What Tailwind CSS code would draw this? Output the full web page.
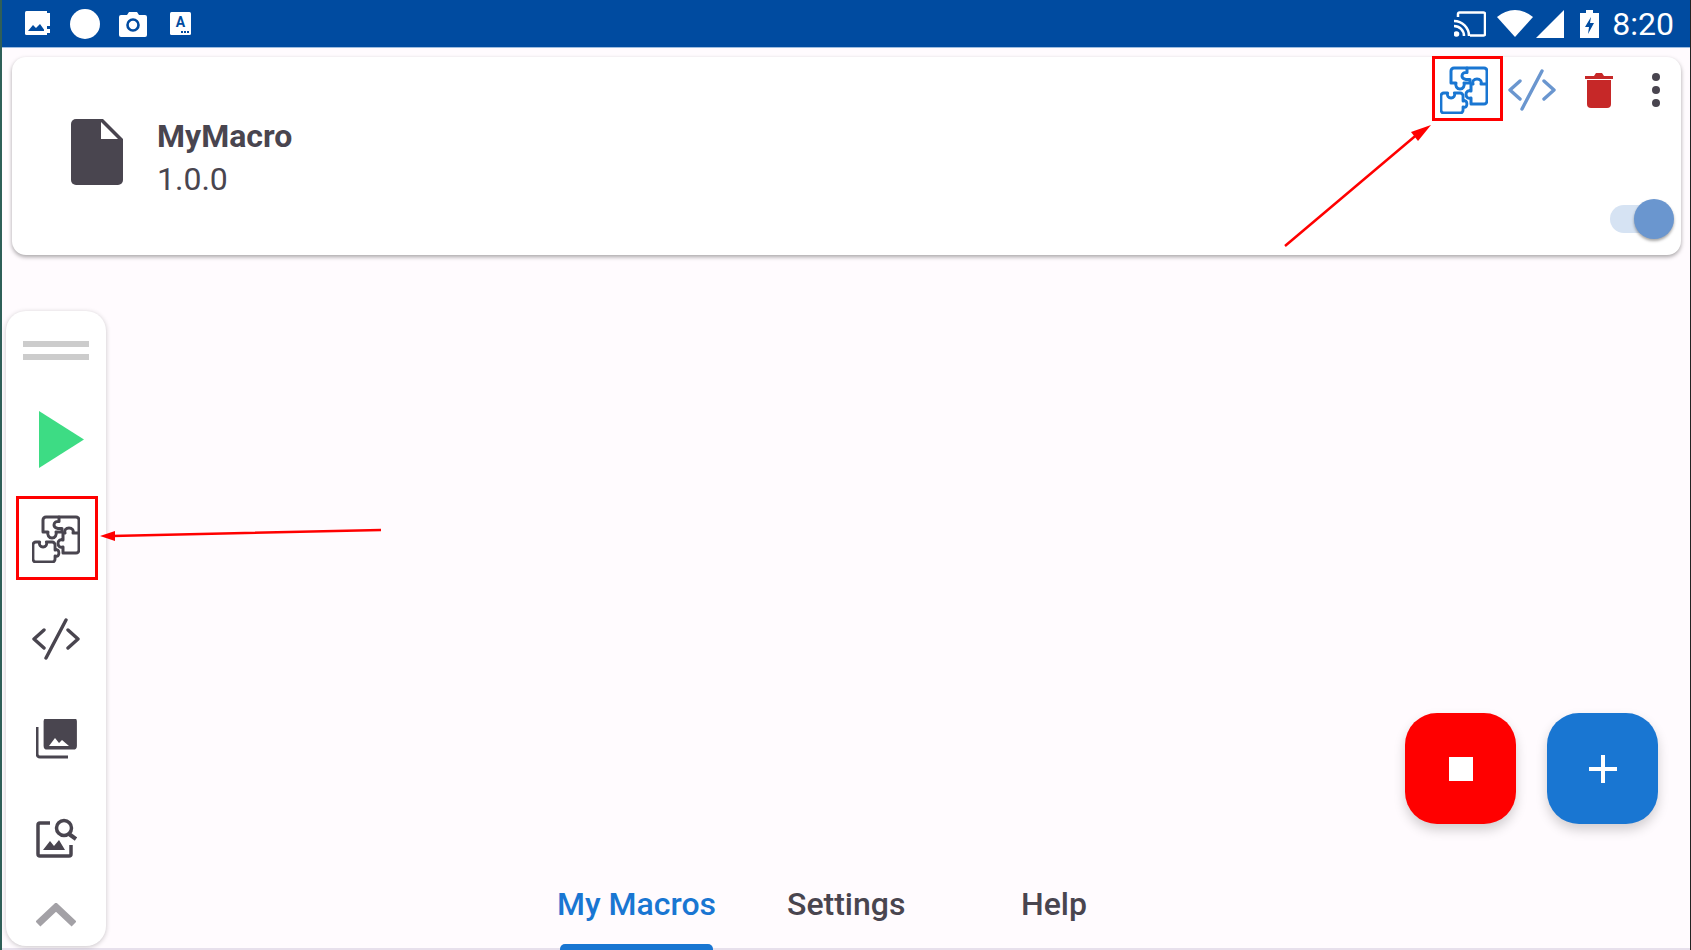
<!DOCTYPE html>
<html lang="en">
<head>
    <meta charset="UTF-8">
    <meta name="viewport" content="width=device-width, initial-scale=1.0">
    <title>MyMacro</title>
    <script src="https://cdn.jsdelivr.net/npm/@tailwindcss/browser@4"></script>
</head>
<body class="bg-[#fffbfe] overflow-hidden">
    <!-- shared icons -->
    <svg class="hidden">
        <symbol id="puzzle" viewBox="0 0 48 48">
            <g fill="none" stroke="currentColor" stroke-width="3" stroke-linejoin="round" stroke-linecap="round">
                <path d="M27 2H14a3 3 0 0 0-3 3v12h5c-1 3 1 6 4 6s5-3 4-6h6v-3.500c-5 .5-8-1-8-3.500s2-4 5-3.500z"/>
                <path d="M27 2h17a3 3 0 0 1 3 3v13h-6c1-3-1-5-4-5s-5 2-4 5h-2v7c-3-1-5 1-5 3.500s2 4.500 5 3.500v6h13a3 3 0 0 0 3-3V18"/>
                <path d="M4 27h4c-1 3 1 5 3.500 5s4.500-2 3.500-5h6a3 3 0 0 1 3 3v5c3-1 4 1 4 3s-1 4-4 3v3a3 3 0 0 1-3 3H4a3 3 0 0 1-3-3V30a3 3 0 0 1 3-3z" transform="translate(0 0) scale(.96 1)"/>
            </g>
        </symbol>
        <symbol id="code" viewBox="0 0 48 42">
            <g fill="none" stroke="currentColor" stroke-width="3.4" stroke-linecap="round" stroke-linejoin="round">
                <path d="M12 12 2 21l10 9M36 12l10 9-10 9M34 2 14 40"/>
            </g>
        </symbol>
    </svg>

    <div class="relative h-[950px] w-[1691px] flex flex-col font-['Roboto',sans-serif] text-[#49454f]">
        <!-- window edges -->
        <div class="absolute left-0 top-0 h-full w-[2px] bg-[#2f5f58] z-20"></div>
        <div class="absolute right-0 top-0 h-full w-[1px] bg-[#222] z-20"></div>

        <!-- status bar -->
        <header class="h-[48px] shrink-0 bg-[#004ba0] border-b border-[#9dbde0] flex items-center pl-[25px] pr-[17px] text-white">
            <svg class="w-[27px] h-[25px]" viewBox="0 0 27 25">
                <rect x="0" y="0" width="22" height="24" rx="1.500" fill="#fff"/>
                <rect x="22" y="2" width="3" height="13" fill="#fff"/>
                <rect x="22" y="18" width="3" height="4" fill="#fff"/>
                <path d="M3 20l5-6 3 3 4-4 5 7z" fill="#004ba0"/>
                <rect x="19" y="0" width="3" height="24" fill="#fff"/>
            </svg>
            <div class="w-[30px] h-[30px] rounded-full bg-white ml-[18px]"></div>
            <svg class="w-[28px] h-[26px] ml-[19px]" viewBox="0 0 28 26">
                <path d="M2 4h6l2-3h8l2 3h6a2 2 0 0 1 2 2v18a2 2 0 0 1-2 2H2a2 2 0 0 1-2-2V6a2 2 0 0 1 2-2z" fill="#fff"/>
                <circle cx="14" cy="14" r="5.500" fill="none" stroke="#004ba0" stroke-width="2.600"/>
            </svg>
            <svg class="w-[21px] h-[23px] ml-[23px]" viewBox="0 0 21 23">
                <rect width="21" height="23" rx="1.500" fill="#fff"/>
                <text x="10.500" y="15" font-size="14" font-weight="700" text-anchor="middle" fill="#004ba0" font-family="Roboto">A</text>
                <path d="M11 19h2v2h-2zM14 19h2v2h-2zM17 19h2v2h-2z" fill="#004ba0"/>
            </svg>

            <div class="ml-auto flex items-center">
                <svg class="w-[32px] h-[26px]" viewBox="0 0 32 26">
                    <path d="M4 6V3a1.500 1.500 0 0 1 1.500-1.500h24A1.500 1.500 0 0 1 31 3v20a1.500 1.500 0 0 1-1.500 1.500H16" fill="none" stroke="#fff" stroke-width="2.500"/>
                    <path d="M0 10a15 15 0 0 1 15 15M0 15a10 10 0 0 1 10 10" fill="none" stroke="#fff" stroke-width="2.500"/>
                    <circle cx="2.500" cy="23" r="2.800" fill="#fff"/>
                </svg>
                <svg class="w-[36px] h-[27px] ml-[11px]" viewBox="0 0 36 27">
                    <path d="M0 7a27 27 0 0 1 36 0L18 27z" fill="#fff"/>
                </svg>
                <svg class="w-[28px] h-[28px] ml-[3px]" viewBox="0 0 28 28">
                    <path d="M28 0v28H0z" fill="#fff"/>
                </svg>
                <svg class="w-[19px] h-[28px] ml-[16px]" viewBox="0 0 19 28">
                    <path d="M6 0h7v3h6v25H0V3h6z" fill="#fff"/>
                    <path d="M11 7l-6 10h4l-1 7 6-11h-4z" fill="#004ba0"/>
                </svg>
                <span class="ml-[13px] text-[32px] leading-none">8:20</span>
            </div>
        </header>

        <!-- macro card -->
        <section class="ml-[12px] mr-[10px] mt-[9px] h-[198px] shrink-0 bg-white rounded-[14px] shadow-[0_2px_4px_rgba(0,0,0,0.35)] flex relative">
            <div class="flex items-center pl-[59px] flex-1">
                <svg class="w-[52px] h-[66px] mb-[8px]" viewBox="0 0 52 66">
                    <path d="M5 0h27l20 20v41a5 5 0 0 1-5 5H5a5 5 0 0 1-5-5V5a5 5 0 0 1 5-5z" fill="#49454f"/>
                    <path d="M30 3v17h17z" fill="#fff"/>
                </svg>
                <div class="ml-[34px] pt-[3px] flex flex-col">
                    <span class="text-[32px] leading-[42px] font-bold -mt-[1px] mb-[1px]">MyMacro</span>
                    <span class="text-[32px] leading-[42px]">1.0.0</span>
                </div>
            </div>
            <div class="flex flex-col items-end pr-[7px]">
                <div class="flex items-center h-[66px] pr-[14px]">
                    <svg class="w-[48px] h-[48px] text-[#1976d2]"><use href="#puzzle"/></svg>
                    <svg class="w-[48px] h-[42px] ml-[20px] text-[#6a96cf]"><use href="#code"/></svg>
                    <svg class="w-[28px] h-[36px] ml-[29px]" viewBox="0 0 28 36">
                        <path d="M0 4h9l2-3h6l2 3h9v3H0z" fill="#c62828"/>
                        <path d="M2 8h24v24a4 4 0 0 1-4 4H6a4 4 0 0 1-4-4z" fill="#c62828"/>
                    </svg>
                    <div class="ml-[39px] flex flex-col gap-[5px]">
                        <div class="w-[8px] h-[8px] rounded-full bg-[#49454f]"></div>
                        <div class="w-[8px] h-[8px] rounded-full bg-[#49454f]"></div>
                        <div class="w-[8px] h-[8px] rounded-full bg-[#49454f]"></div>
                    </div>
                </div>
                <div class="mt-[76px] w-[64px] h-[40px] flex items-center relative">
                    <div class="w-[51px] h-[28px] rounded-full bg-[#d6e3f3]"></div>
                    <div class="absolute right-0 top-0 w-[40px] h-[40px] rounded-full bg-[#6a96cf] shadow-[0_2px_3px_rgba(0,0,0,0.35)]"></div>
                </div>
            </div>
        </section>

        <!-- tabs -->
        <nav class="mt-auto h-[62px] relative shrink-0 flex text-[32px] font-medium leading-none border-b-2 border-[#e7e0ec]">
            <div class="ml-[557px] text-[#1976d2] whitespace-nowrap w-[160px]">My Macros</div>
            <div class="ml-[70px] whitespace-nowrap w-[164px]">Settings</div>
            <div class="ml-[70px] whitespace-nowrap">Help</div>
            <div class="absolute left-[560px] top-[56px] w-[153px] h-[6px] rounded-t-[5px] bg-[#1976d2]"></div>
        </nav>

        <!-- floating tool panel -->
        <aside class="absolute left-[6px] top-[311px] w-[100px] h-[635px] bg-white rounded-[20px] shadow-[0_1px_5px_rgba(0,0,0,0.22)] flex flex-col items-center">
            <div class="mt-[30px] w-[66px] flex flex-col gap-[7px]">
                <div class="h-[6px] bg-[#cccccc]"></div>
                <div class="h-[6px] bg-[#cccccc]"></div>
            </div>
            <svg class="mt-[51px] ml-[10px] w-[45px] h-[57px]" viewBox="0 0 45 57">
                <path d="M0 0l45 28.500L0 57z" fill="#3ddc84"/>
            </svg>
            <svg class="mt-[47px] w-[48px] h-[48px]"><use href="#puzzle"/></svg>
            <svg class="mt-[55px] w-[48px] h-[42px]"><use href="#code"/></svg>
            <svg class="mt-[59px] w-[41px] h-[40px]" viewBox="0 0 41 40">
                <path d="M8 0h29a4 4 0 0 1 4 4v27a4 4 0 0 1-4 4H8a4 4 0 0 1-4-4V4a4 4 0 0 1 4-4z" fill="#49454f" transform="translate(4 -1) scale(0.9)"/>
                <path d="M1 8v27a3 3 0 0 0 3 3h28" fill="none" stroke="#49454f" stroke-width="3"/>
                <path d="M13 27l6-8 4 5 3-3 7 6z" fill="#fff"/>
            </svg>
            <svg class="mt-[58px] w-[41px] h-[41px]" viewBox="0 0 41 41">
                <path d="M14 6H4a2 2 0 0 0-2 2v29a2 2 0 0 0 2 2h29a2 2 0 0 0 2-2V28" fill="none" stroke="#49454f" stroke-width="3.500"/>
                <path d="M7 33l7-9 4 5 5-6 6 10z" fill="#49454f"/>
                <circle cx="28" cy="11" r="7.500" fill="none" stroke="#49454f" stroke-width="3.500"/>
                <path d="M33 17l7 5" stroke="#49454f" stroke-width="4"/>
            </svg>
            <svg class="mt-[45px] w-[40px] h-[24px]" viewBox="0 0 40 24">
                <path d="M2 21 20 4l18 17" fill="none" stroke="#a3a1a6" stroke-width="7"/>
            </svg>
        </aside>

        <!-- floating actions -->
        <div class="absolute left-[1405px] top-[713px] flex gap-[31px]">
            <button class="w-[111px] h-[111px] rounded-[32px] bg-[#ff0000] shadow-[0_6px_12px_rgba(0,0,0,0.18)] flex items-center justify-center">
                <div class="w-[24px] h-[24px] bg-white"></div>
            </button>
            <button class="w-[111px] h-[111px] rounded-[32px] bg-[#1976d2] shadow-[0_6px_12px_rgba(0,0,0,0.18)] flex items-center justify-center">
                <svg class="w-[28px] h-[28px]" viewBox="0 0 28 28"><path d="M14 0v28M0 14h28" stroke="#fff" stroke-width="4"/></svg>
            </button>
        </div>

        <!-- annotations -->
        <div class="absolute left-[1432px] top-[56px] w-[71px] h-[65px] border-[3px] border-[#ff0000]"></div>
        <div class="absolute left-[16px] top-[496px] w-[82px] h-[84px] border-[3px] border-[#ff0000]"></div>
        <svg class="absolute left-0 top-0 w-[1691px] h-[950px] pointer-events-none" viewBox="0 0 1691 950">
            <path d="M1285 246 1420 132M381 530 112 536" stroke="#ff0000" stroke-width="2.500" fill="none"/>
            <path d="M1431 125l-20 7 7 9z" fill="#ff0000"/>
            <path d="M100 536l15-5v10z" fill="#ff0000"/>
        </svg>
    </div>
</body>
</html>
